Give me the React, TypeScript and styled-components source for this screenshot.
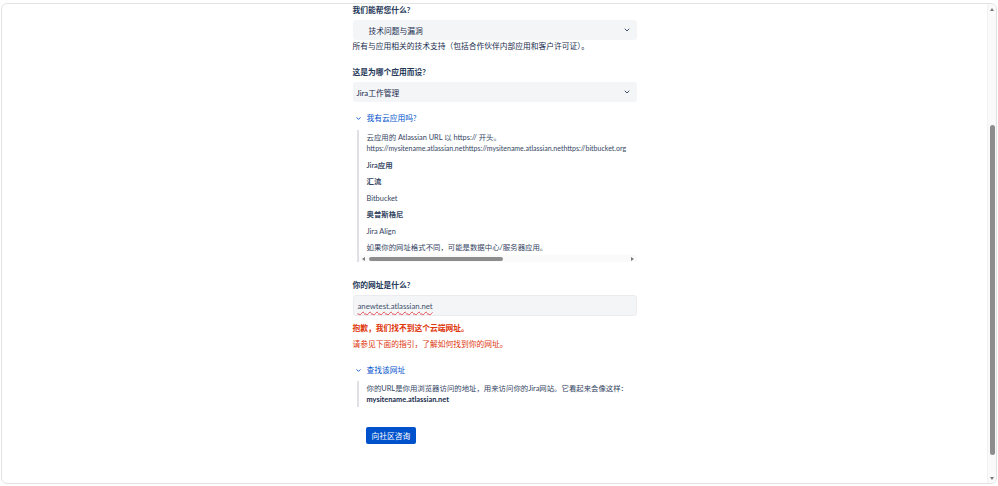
import React from 'react';
import styled, { createGlobalStyle } from 'styled-components';
import { ChevronDown } from 'lucide-react';

const GlobalStyle = createGlobalStyle`
  html, body {
    margin: 0;
    padding: 0;
    background: #ffffff;
  }
  body {
    font-family: Lato, "Noto Sans CJK SC", sans-serif;
    color: #172b4d;
  }
  * {
    box-sizing: border-box;
  }
`;

export default function App() {
  return (
    <>
      <GlobalStyle />
      <Page>
        <Frame>
          <Content>
            <Column>
              <Label>我们能帮您什么?</Label>
              <Select $indent>
                技术问题与漏洞
                <ChevronDown size={8} strokeWidth={3} />
              </Select>
              <Help>所有与应用相关的技术支持（包括合作伙伴内部应用和客户许可证）。</Help>

              <Label $gap={14}>这是为哪个应用而设?</Label>
              <Select>
                Jira工作管理
                <ChevronDown size={8} strokeWidth={3} />
              </Select>

              <Expander $gap={10}>
                <ChevronDown size={7} strokeWidth={3} />
                我有云应用吗?
              </Expander>
              <ScrollQuote>
                <QuoteViewport>
                  <QuoteInner>
                    <QuoteText>
                      云应用的 Atlassian URL 以 https:// 开头。
                      <br />
                      <UrlLine>
                        https://mysitename.atlassian.nethttps://mysitename.atlassian.nethttps://bitbucket.org
                      </UrlLine>
                    </QuoteText>
                    <QuoteText $strong>Jira应用</QuoteText>
                    <QuoteText $strong>汇流</QuoteText>
                    <QuoteText>Bitbucket</QuoteText>
                    <QuoteText $strong>奥普斯格尼</QuoteText>
                    <QuoteText>Jira Align</QuoteText>
                    <QuoteText>如果你的网址格式不同，可能是数据中心/服务器应用。</QuoteText>
                  </QuoteInner>
                </QuoteViewport>
                <HBar>
                  <HArrow $dir="left" />
                  <HTrack>
                    <HThumb />
                  </HTrack>
                  <HArrow $dir="right" />
                </HBar>
              </ScrollQuote>

              <Label $gap={17}>你的网址是什么?</Label>
              <InputBox>
                <Misspelled>anewtest.atlassian.net</Misspelled>
              </InputBox>
              <ErrorText $bold $gap={6}>抱歉，我们找不到这个云端网址。</ErrorText>
              <ErrorText $gap={4}>请参见下面的指引，了解如何找到你的网址。</ErrorText>

              <Expander $gap={14}>
                <ChevronDown size={7} strokeWidth={3} />
                查找该网址
              </Expander>
              <Quote>
                你的URL是你用浏览器访问的地址，用来访问你的Jira网站。它看起来会像这样：
                <br />
                <strong>mysitename.atlassian.net</strong>
              </Quote>

              <Button type="button">向社区咨询</Button>
            </Column>
          </Content>

          <VBar>
            <VArrow $dir="up" />
            <VTrack>
              <VThumb />
            </VTrack>
            <VArrow $dir="down" />
          </VBar>
        </Frame>
      </Page>
    </>
  );
}

const Page = styled.div`
  height: 486px;
  padding: 3px 1px 2px 1px;
`;

const Frame = styled.div`
  height: 481px;
  display: flex;
  border: 1px solid #e3e3e3;
  border-radius: 6px;
  background: #ffffff;
  overflow: hidden;
`;

const Content = styled.div`
  flex: 1;
  min-width: 0;
`;

const VBar = styled.div`
  width: 9px;
  display: flex;
  flex-direction: column;
  background: #fafafa;
  border-left: 1px solid #f2f2f2;
`;

const VArrow = styled.div<{ $dir: 'up' | 'down' }>`
  height: 10px;
  display: flex;
  align-items: center;
  justify-content: center;

  &::before {
    content: '';
    border-left: 2.5px solid transparent;
    border-right: 2.5px solid transparent;
    ${(p) => (p.$dir === 'up' ? 'border-bottom: 3px solid #7a7a7a;' : 'border-top: 3px solid #7a7a7a;')}
  }
`;

const VTrack = styled.div`
  flex: 1;
  position: relative;
`;

const VThumb = styled.div`
  position: absolute;
  left: 2px;
  right: 1px;
  top: 111px;
  height: 330px;
  border-radius: 3px;
  background: #8d8d8d;
`;

const Column = styled.div`
  width: 284px;
  margin: 0 auto;
  font-size: 7.75px;
`;

const Label = styled.div<{ $gap?: number }>`
  margin-top: ${(p) => p.$gap ?? 0}px;
  line-height: 12px;
  font-weight: 700;
  color: #253858;
`;

const Select = styled.div<{ $indent?: boolean }>`
  margin-top: 4px;
  height: 20px;
  display: flex;
  align-items: center;
  justify-content: space-between;
  padding: 0 6px 0 ${(p) => (p.$indent ? 16 : 4)}px;
  background: #f4f5f7;
  border-radius: 3px;
  color: #172b4d;

  svg {
    color: #42526e;
  }
`;

const Help = styled.div`
  line-height: 12px;
  color: #172b4d;
`;

const Expander = styled.div<{ $gap?: number }>`
  margin-top: ${(p) => p.$gap ?? 0}px;
  display: flex;
  align-items: center;
  gap: 5px;
  padding-left: 2px;
  line-height: 12px;
  color: #0052cc;
`;

const ScrollQuote = styled.div`
  margin: 6px 0 0 4px;
  border-left: 2px solid #dfe1e6;
`;

const QuoteViewport = styled.div`
  overflow: hidden;
`;

const QuoteInner = styled.div`
  width: 540px;
  padding: 2px 0 2px 8px;
  font-size: 7.4px;
`;

const QuoteText = styled.p<{ $strong?: boolean }>`
  margin: 5.5px 0 0;
  line-height: 11px;
  font-weight: ${(p) => (p.$strong ? 600 : 400)};
  color: #344563;

  &:first-child {
    margin-top: 0;
  }
`;

const UrlLine = styled.span`
  white-space: nowrap;
  font-size: 7px;
`;

const HBar = styled.div`
  height: 7px;
  display: flex;
  background: #fafafa;
`;

const HArrow = styled.div<{ $dir: 'left' | 'right' }>`
  width: 9px;
  display: flex;
  align-items: center;
  justify-content: center;

  &::before {
    content: '';
    border-top: 2.5px solid transparent;
    border-bottom: 2.5px solid transparent;
    ${(p) => (p.$dir === 'left' ? 'border-right: 3px solid #7a7a7a;' : 'border-left: 3px solid #7a7a7a;')}
  }
`;

const HTrack = styled.div`
  flex: 1;
  display: flex;
  align-items: center;
`;

const HThumb = styled.div`
  width: 134px;
  height: 4px;
  margin-left: 1px;
  border-radius: 2px;
  background: #8d8d8d;
`;

const InputBox = styled.div`
  margin-top: 4px;
  height: 21px;
  display: flex;
  align-items: center;
  padding: 0 4px;
  border: 1px solid #ebecf0;
  border-radius: 3px;
  background: #f4f5f7;
  color: #42526e;
`;

const Misspelled = styled.span`
  text-decoration: underline wavy #e5484d;
  text-decoration-thickness: 0.6px;
  text-underline-offset: 1.5px;
`;

const ErrorText = styled.div<{ $bold?: boolean; $gap?: number }>`
  margin-top: ${(p) => p.$gap ?? 0}px;
  line-height: 12px;
  font-weight: ${(p) => (p.$bold ? 700 : 400)};
  color: #de350b;
`;

const Quote = styled.div`
  margin: 5px 0 0 4px;
  padding: 2px 0 2px 8px;
  border-left: 2px solid #dfe1e6;
  line-height: 11px;
  font-size: 7.4px;
  color: #344563;

  strong {
    color: #172b4d;
  }
`;

const Button = styled.button`
  display: block;
  margin: 20px 0 0 13px;
  height: 17px;
  padding: 0 6px;
  border: none;
  border-radius: 2px;
  background: #0052cc;
  color: #ffffff;
  font-family: inherit;
  font-size: 7.75px;
  cursor: pointer;
`;
